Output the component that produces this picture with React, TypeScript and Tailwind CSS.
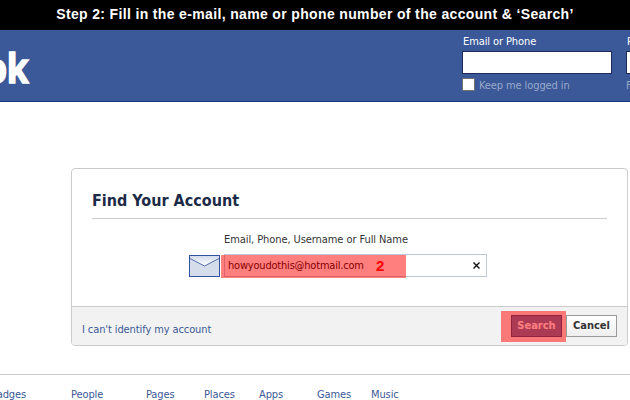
const footerLinks = [
  { label: 'Badges', width: 'w-[81px]' },
  { label: 'People', width: 'w-[75px]' },
  { label: 'Pages', width: 'w-[58px]' },
  { label: 'Places', width: 'w-[55px]' },
  { label: 'Apps', width: 'w-[58px]' },
  { label: 'Games', width: 'w-[54px]' },
  { label: 'Music', width: 'w-[40px]' },
];

const EnvelopeIcon = () => (
  <svg width="31" height="22" viewBox="0 0 31 22" className="shrink-0">
    <defs>
      <linearGradient id="flap" x1="0" y1="0" x2="0" y2="1">
        <stop offset="0" stopColor="#d3dbea" />
        <stop offset="1" stopColor="#ffffff" />
      </linearGradient>
    </defs>
    <rect x="0.5" y="0.5" width="30" height="21" fill="#d5dcea" stroke="#3353a0" />
    <path d="M1 1h29v2.5L15.5 11 1 3.5z" fill="url(#flap)" />
    <path d="M1 3.5l14.5 7.5 14.5-7.5" fill="none" stroke="#5570ad" />
  </svg>
);

const Header = () => (
  <header className="flex h-[72px] justify-between border-b border-[#133783] bg-[#3b5998]">
    <div className="flex h-full w-[28px] items-start justify-end">
      <span className="mt-[10px] origin-right scale-x-[0.84] text-[42px] leading-[53px] font-bold tracking-[-0.5px] text-white [-webkit-text-stroke:1.6px_white] [font-family:'Noto_Sans',sans-serif]">
        facebook
      </span>
    </div>
    <div className="flex w-[168px] shrink-0 gap-[14px] overflow-hidden">
      <div className="w-[150px] shrink-0">
        <label className="mt-[4px] block h-[17px] pl-px leading-[15px] tracking-[-0.1px] text-white">Email or Phone</label>
        <input className="block h-[23px] w-[150px] border border-[#1d2a5b] bg-white" />
        <div className="mt-[4px] flex items-start gap-[4px] text-[#98a9ca]">
          <span className="h-[13px] w-[13px] border border-[#707070] bg-white" />
          <span className="leading-[15px] tracking-[-0.1px]">Keep me logged in</span>
        </div>
      </div>
      <div className="w-[150px] shrink-0">
        <label className="mt-[4px] block h-[17px] pl-px leading-[15px] text-white">Password</label>
        <input className="block h-[23px] w-[150px] border border-[#1d2a5b] bg-white" />
        <a className="mt-[4px] block leading-[15px] text-[#98a9ca]">Forgot your password?</a>
      </div>
    </div>
  </header>
);

const App = () => {
  return (
    <div className="h-[400px] w-[630px] overflow-hidden bg-white text-[11px] text-[#333333] [font-family:'DejaVu_Sans_Condensed','DejaVu_Sans',sans-serif]">
      <div className="flex h-[30px] items-center justify-center bg-black pb-[2px] text-[14px] font-bold tracking-[0.35px] whitespace-nowrap text-white [font-family:'Liberation_Sans',sans-serif]">
        Step 2: Fill in the e-mail, name or phone number of the account &amp; ‘Search’
      </div>
      <Header />

      <main className="mt-[66px] ml-[71px] h-[178px] w-[557px] rounded-[4px] border border-[#cccccc]">
        <div className="h-[137px] px-[20px] pt-[20px]">
          <h1 className="h-[30px] border-b border-[#cccccc] text-[16px] leading-[23px] font-bold text-[#1c2a47]">
            Find Your Account
          </h1>
          <div className="ml-[97px]">
            <label className="mt-[14px] ml-[35px] block h-[21px] leading-[14px] tracking-[-0.08px]">
              Email, Phone, Username or Full Name
            </label>
            <div className="flex items-center gap-[4px]">
              <EnvelopeIcon />
              <div className="relative flex h-[23px] w-[263px] items-center justify-between border border-[#bdc7d8] px-[3px]">
                <span className="pt-px tracking-[-0.2px] text-black">howyoudothis@hotmail.com</span>
                <svg width="7" height="7" viewBox="0 0 7 7" className="mr-[3px]">
                  <path d="M0.5 0.5l6 6M6.5 0.5l-6 6" stroke="#111111" strokeWidth="1.4" />
                </svg>
                <div className="absolute top-0 left-[-4px] flex h-[23px] w-[185px] items-center bg-[#ff0000]/50 pl-[155px] text-[15px] font-bold text-[#ff0000] [font-family:'Liberation_Sans',sans-serif]">
                  2
                </div>
              </div>
            </div>
          </div>
        </div>
        <div className="flex h-[39px] items-center justify-between rounded-b-[3px] border-t border-[#cccccc] bg-[#f2f2f2] pr-[10px] pl-[10px]">
          <a className="mt-[8px] tracking-[-0.1px] text-[#3b5998]">I can't identify my account</a>
          <div className="flex gap-[4px] text-[11px] font-bold">
            <button className="relative h-[22px] w-[51px] border border-[#29447e] bg-[#5b74a8] pt-px text-white">
              Search
              <span className="absolute top-[-5px] left-[-11px] h-[31px] w-[65px] bg-[#ff0000]/50" />
            </button>
            <button className="h-[22px] w-[51px] border border-[#999999] bg-linear-to-b from-white to-[#eeeeee] pt-px text-[#333333]">
              Cancel
            </button>
          </div>
        </div>
      </main>

      <footer className="mt-[28px] flex border-t border-[#cccccc] pt-[13px] text-[#3b5998]">
        <div className="ml-[-10px] flex">
          {footerLinks.map((link) => (
            <a key={link.label} className={`${link.width} shrink-0 leading-[14px] tracking-[-0.1px]`}>
              {link.label}
            </a>
          ))}
        </div>
      </footer>
    </div>
  );
};

export default App;
